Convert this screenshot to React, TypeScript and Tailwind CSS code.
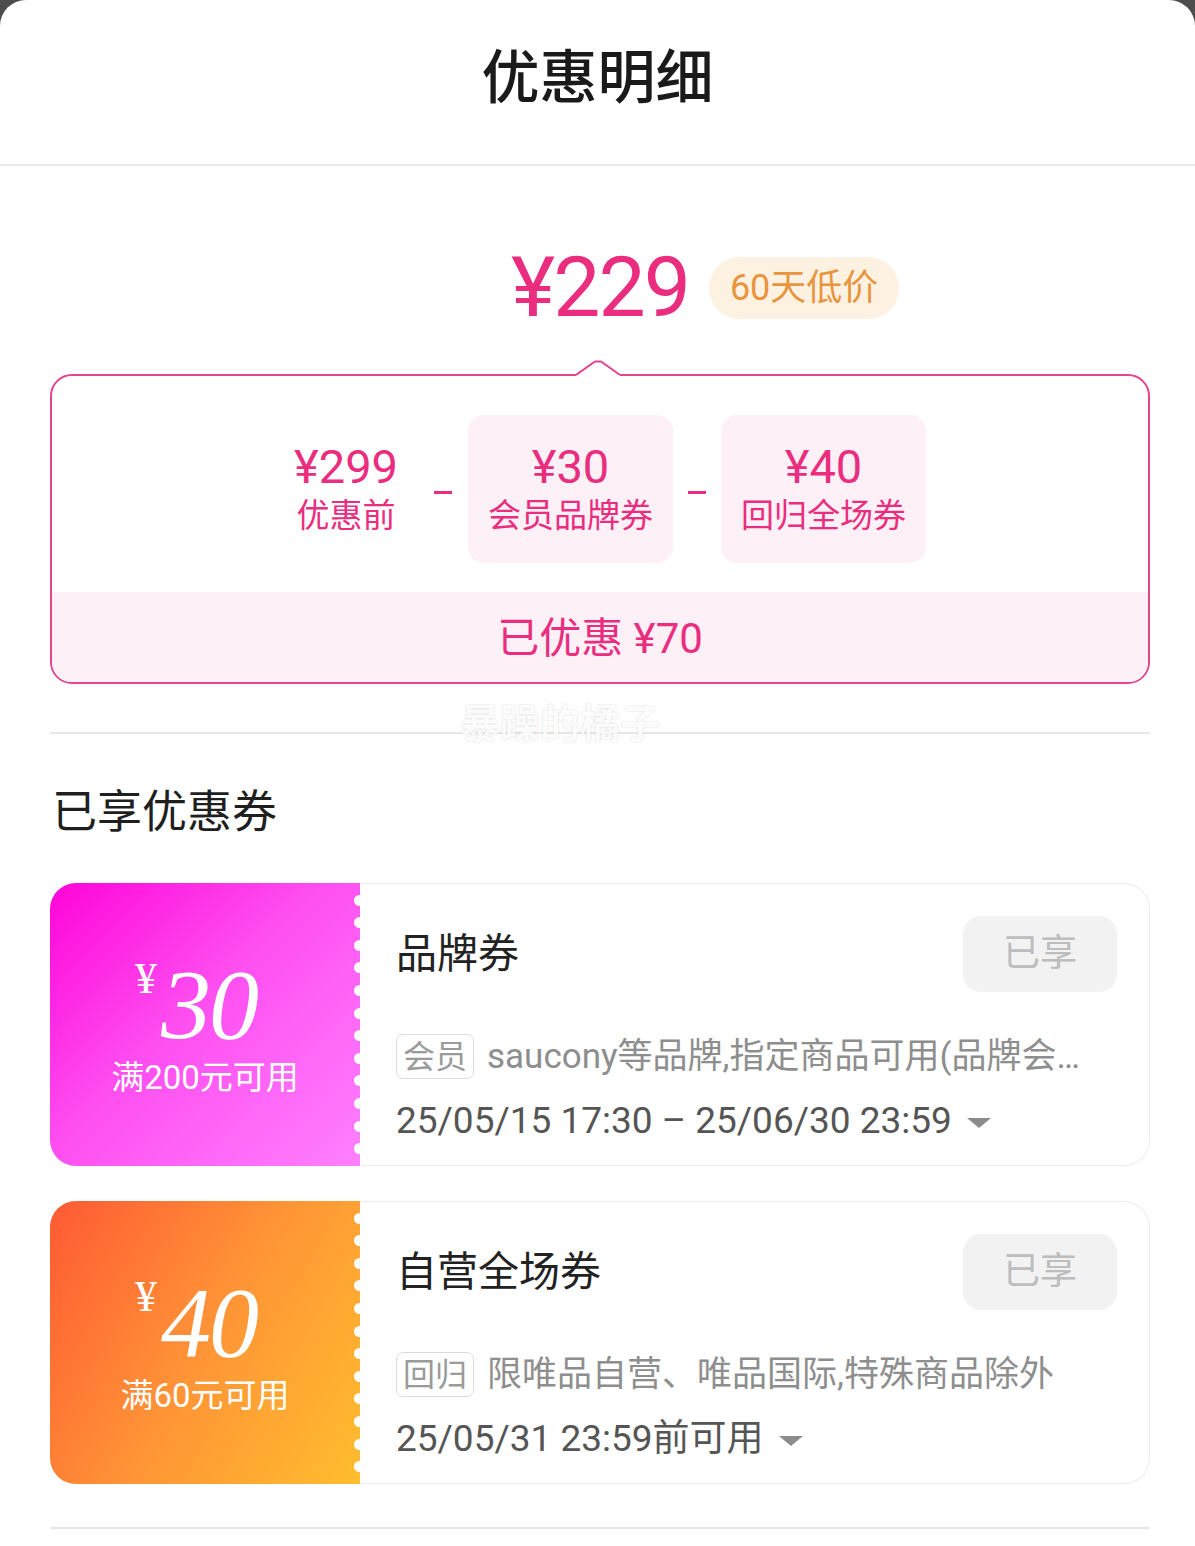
import React from 'react';

const font = "font-['Roboto','Noto_Sans_CJK_SC',sans-serif]";

type CouponProps = {
  bg: string;
  amount: string;
  cond: string;
  title: string;
  tag: string;
  desc: string;
  date: string;
};

function Caret() {
  return (
    <svg width="26" height="12" viewBox="0 0 26 12" className="ml-[14px] mt-[4px] shrink-0">
      <path d="M1 1 L25 1 L13 11 Z" fill="#8c8c8c" />
    </svg>
  );
}

function Coupon({bg, amount, cond, title, tag, desc, date}: CouponProps) {
  const dots = Array.from({length: 12});
  return (
    <div className="flex h-[283px] w-full">
      {/* left ticket stub */}
      <div className={`relative flex w-[310px] shrink-0 flex-col items-center justify-center rounded-l-[26px] ${bg}`}>
        <div className="mr-[18px] flex items-start text-white font-['Liberation_Serif',serif] italic leading-none">
          <span className="mt-[2px] mr-[4px] text-[44px] not-italic">¥</span>
          <span className="text-[100px] tracking-[-2px]">{amount}</span>
        </div>
        <div className={`mt-[6px] text-[33px] leading-none text-white ${font}`}>{cond}</div>
        <div className="absolute right-[-5px] top-0 flex h-full flex-col justify-evenly">
          {dots.map((_, i) => (
            <div key={i} className="h-[11px] w-[11px] rounded-full bg-white" />
          ))}
        </div>
      </div>

      {/* right details */}
      <div className="flex min-w-0 flex-1 flex-col rounded-r-[26px] border-y-[1.5px] border-r-[1.5px] border-[#ececec] bg-white pl-[36px] pr-[32px] pt-[32px]">
        <div className="flex items-center justify-between">
          <div className={`text-[41px] leading-none text-[#222] ${font}`}>{title}</div>
          <div className={`flex h-[76px] w-[154px] items-center justify-center rounded-[18px] bg-[#f2f2f2] text-[37px] text-[#bdbdbd] ${font}`}>
            已享
          </div>
        </div>
        <div className="mt-[42px] flex min-w-0 items-center pr-[4px]">
          <span className={`flex h-[45px] shrink-0 items-center rounded-[7px] border-[1.5px] border-[#dcdcdc] px-[6px] text-[32px] leading-none text-[#9a9a9a] ${font}`}>
            {tag}
          </span>
          <span className={`ml-[13px] min-w-0 truncate text-[35px] leading-[45px] text-[#8e8e8e] ${font}`}>{desc}</span>
        </div>
        <div className="mt-[21px] flex items-center">
          <span className={`text-[37px] leading-[42px] text-[#555] ${font}`}>{date}</span>
          <Caret />
        </div>
      </div>
    </div>
  );
}

export default function App() {
  const pink = 'text-[#ea2d7e]';
  return (
    <div className="min-h-[1546px] w-[1195px] bg-[#4d4d4d]">
      <div className={`min-h-[1546px] rounded-t-[26px] bg-white ${font}`}>
        {/* header */}
        <div className="flex h-[166px] items-center justify-center border-b-2 border-[#e8e8e8] pb-[8px]">
          <h1 className="text-[58px] font-medium leading-none text-[#1a1a1a]">优惠明细</h1>
        </div>

        <div className="relative pl-[50px] pr-[45px] pt-[77px]">
          {/* final price */}
          <div className="grid h-[90px] grid-cols-[1fr_auto_1fr] items-center">
            <div />
            <div className={`text-[84px] leading-none tracking-[-2px] ${pink} font-['Roboto',sans-serif]`}>¥229</div>
            <div className="pl-[20px]">
              <span className="inline-flex h-[62px] items-center rounded-full bg-[#fdf1e1] px-[21px] text-[36px] leading-none text-[#e8953d]">
                60天低价
              </span>
            </div>
          </div>

          {/* breakdown */}
          <div className="relative mt-[41px] rounded-[22px] border-2 border-[#e2448e]">
            <svg
              width="44"
              height="18"
              viewBox="0 0 44 18"
              className="absolute left-1/2 top-[-16px] -translate-x-[24px]"
            >
              <path d="M0 15 L19 1.5 L25 1.5 L44 15 L44 18 L0 18 Z" fill="#fff" />
              <path d="M0 15 L19 1.5 L25 1.5 L44 15" fill="none" stroke="#e2448e" strokeWidth="2" strokeLinejoin="round" />
            </svg>

            <div className="flex items-center justify-center pb-[29px] pt-[39px]">
              <div className={`flex flex-col items-center px-[20px] ${pink}`}>
                <span className="text-[47px] leading-[54px]">¥299</span>
                <span className="text-[33px] leading-[44px]">优惠前</span>
              </div>
              <span className="mx-[16px] mt-[6px] h-[3px] w-[18px] bg-[#ea2d7e]" />
              <div className={`flex h-[148px] w-[205px] flex-col items-center justify-center rounded-[16px] bg-[#fdf0f6] ${pink}`}>
                <span className="text-[47px] leading-[54px]">¥30</span>
                <span className="text-[33px] leading-[44px]">会员品牌券</span>
              </div>
              <span className="mx-[15px] mt-[6px] h-[3px] w-[18px] bg-[#ea2d7e]" />
              <div className={`flex h-[148px] w-[205px] flex-col items-center justify-center rounded-[16px] bg-[#fdf0f6] ${pink}`}>
                <span className="text-[47px] leading-[54px]">¥40</span>
                <span className="text-[33px] leading-[44px]">回归全场券</span>
              </div>
            </div>

            <div className={`flex h-[90px] items-center justify-center rounded-b-[20px] bg-[#fdf0f7] pt-[4px] text-[42px] leading-none ${pink}`}>
              已优惠 ¥70
            </div>
          </div>

          <div className="mt-[48px] h-[2px] bg-[#e6e6e6]" />

          {/* watermark */}
          <div className="pointer-events-none absolute left-[460px] top-[539px] text-[40px] font-bold leading-none text-white/90 [text-shadow:0_0_2px_rgba(0,0,0,0.18)]">
            暴躁的橘子
          </div>

          <h2 className="mt-[56px] pl-[2px] text-[45px] leading-none text-[#1f1f1f]">已享优惠券</h2>

          <div className="mt-[48px] flex flex-col gap-[35px]">
            <Coupon
              bg="bg-[linear-gradient(135deg,#ff04d8_0%,#ff4ef0_45%,#ff80ff_100%)]"
              amount="30"
              cond="满200元可用"
              title="品牌券"
              tag="会员"
              desc="saucony等品牌,指定商品可用(品牌会员专享)"
              date="25/05/15 17:30 – 25/06/30 23:59"
            />
            <Coupon
              bg="bg-[linear-gradient(120deg,#ff5a34_0%,#ff9436_50%,#ffbd2e_100%)]"
              amount="40"
              cond="满60元可用"
              title="自营全场券"
              tag="回归"
              desc="限唯品自营、唯品国际,特殊商品除外"
              date="25/05/31 23:59前可用"
            />
          </div>

          <div className="mt-[43px] h-[2px] bg-[#e6e6e6]" />
        </div>
      </div>
    </div>
  );
}
